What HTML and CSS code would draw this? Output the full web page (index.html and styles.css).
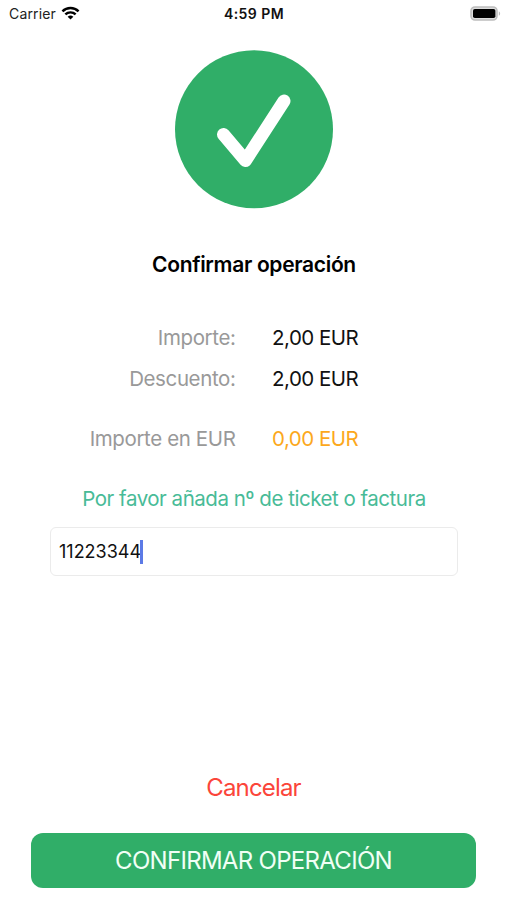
FILE: index.html
```
<!DOCTYPE html>
<html lang="es">
<head>
<meta charset="utf-8">
<title>Confirmar operación</title>
<link rel="stylesheet" href="styles.css">
</head>
<body>
<div class="screen">
  <header class="status">
    <div class="carrier"><span>Carrier</span>
      <svg class="wifi" width="19" height="14" viewBox="0 0 20 14" fill="none" stroke="#000" stroke-width="2.6">
        <path d="M1.5 5.2a12.3 12.3 0 0 1 17 0"/>
        <path d="M4.6 8.5a7.8 7.8 0 0 1 10.8 0"/>
        <path d="M10 13.8L7 10.9a4.4 4.4 0 0 1 6 0z" fill="#000" stroke="none"/>
      </svg>
    </div>
    <div class="time">4:59 PM</div>
    <svg class="battery" width="31" height="15" viewBox="0 0 31 15">
      <rect x="1" y="1" width="26" height="13" rx="4" fill="#ddd" stroke="#bdbdbd" stroke-width="1.6"/>
      <rect x="3" y="3" width="22.4" height="9" rx="1.8" fill="#000"/>
      <path d="M28.8 5.2c1.8.8 1.8 3.8 0 4.6z" fill="#bdbdbd"/>
    </svg>
  </header>
  <main>
    <svg class="check" width="159" height="159" viewBox="0 0 159 159">
      <circle cx="79" cy="79.3" r="79" fill="#30ae68"/>
      <path d="M48.5 84.5L70.5 110.5L109 51" fill="none" stroke="#fff" stroke-width="13" stroke-linecap="round" stroke-linejoin="round"/>
    </svg>
    <h1>Confirmar operación</h1>
    <dl class="amounts">
      <dt>Importe:</dt><dd>2,00 EUR</dd>
      <dt>Descuento:</dt><dd>2,00 EUR</dd>
      <dt class="total">Importe en EUR</dt><dd class="total final">0,00 EUR</dd>
    </dl>
    <p class="hint">Por favor añada nº de ticket o factura</p>
    <div class="field"><span>11223344</span><i class="caret"></i></div>
  </main>
  <footer>
    <a class="cancel">Cancelar</a>
    <button class="confirm">CONFIRMAR OPERACIÓN</button>
  </footer>
</div>
</body>
</html>
```
FILE: styles.css
```
* { box-sizing: border-box; margin: 0; padding: 0; }
body {
  background: #fff;
  color: #111;
  font-family: Inter, "Liberation Sans", sans-serif;
}
.screen { display: flex; flex-direction: column; height: 900px; width: 507px; }
.status {
  display: grid;
  grid-template-columns: 1fr auto 1fr;
  align-items: center;
  height: 28px;
  padding: 0 6px 0 9px;
  font-size: 14px;
  line-height: 18px;
}
.carrier { display: flex; align-items: center; gap: 5px; color: #222; letter-spacing: .15px; }
.wifi { margin-top: -3px; }
.time { font-weight: 600; letter-spacing: .45px; margin-right: 2px; }
.battery { justify-self: end; margin-top: -1px; }
main { display: flex; flex-direction: column; align-items: center; padding: 22px 49px 0 50px; }
.check { display: block; }
h1 { margin-top: 42px; font-size: 21px; line-height: 28px; font-weight: 600; letter-spacing: -.32px; color: #000; white-space: nowrap; }
.amounts {
  display: grid;
  grid-template-columns: 185.5px 186px;
  column-gap: 36.5px;
  width: 408px;
  margin-top: 38px;
  font-size: 20.5px;
  line-height: 41px;
  letter-spacing: -.38px;
}
dt { text-align: right; color: #999; }
dd { letter-spacing: -.5px; }
.total { margin-top: 20px; line-height: 40px; }
.final { color: #fca81c; }
.hint { margin-top: 20px; font-size: 20.5px; line-height: 40px; letter-spacing: -.48px; color: #48bb97; white-space: nowrap; }
.field {
  display: flex;
  align-items: center;
  width: 408px;
  height: 49px;
  margin-top: 8px;
  padding-left: 8px;
  border: 1px solid #ebebeb;
  border-radius: 6px;
  font-size: 18px;
}
.caret { width: 3px; height: 24px; margin-left: -1px; background: #5c7ae6; }
footer { display: flex; flex-direction: column; align-items: center; margin-top: auto; padding: 0 31px 12px; }
.cancel { margin-bottom: 25px; font-size: 24px; line-height: 40px; letter-spacing: -.85px; color: #fb453a; }
.confirm {
  width: 445px;
  height: 55px;
  border: 0;
  border-radius: 12px;
  background: #30ae68;
  color: #f0fff5;
  font-family: inherit;
  font-size: 24px;
  letter-spacing: -.7px;
  white-space: nowrap;
}
```
